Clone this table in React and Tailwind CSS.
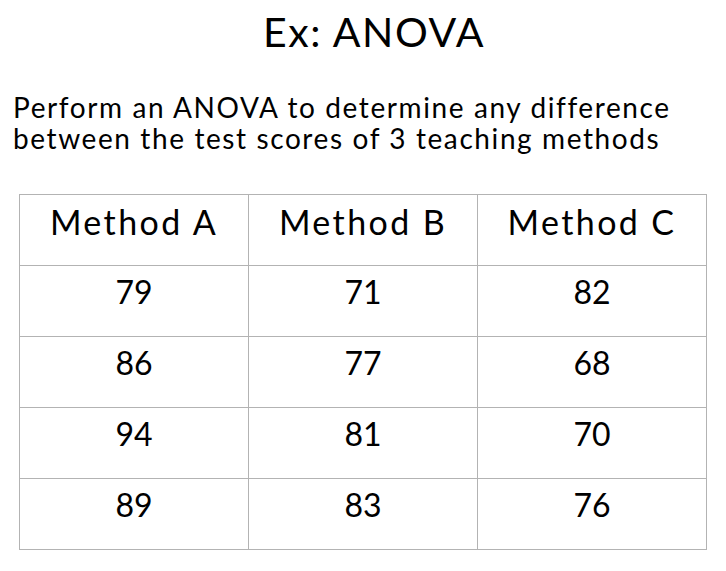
const rows = [
  ['79', '71', '82'],
  ['86', '77', '68'],
  ['94', '81', '70'],
  ['89', '83', '76'],
];

export default function App() {
  return (
    <div className="h-[571px] w-[726px] bg-white text-black" style={{ fontFamily: 'Lato, "Noto Sans", sans-serif' }}>
      <h1 className="pt-[8px] pl-[22px] text-center text-[41px] leading-[48px] tracking-[1.6px]">Ex: ANOVA</h1>
      <p className="mt-[36px] pl-[13px] text-[28px] leading-[31px] tracking-[1.6px]">
        Perform an ANOVA to determine any difference
        <br />
        between the test scores of 3 teaching methods
      </p>
      <table className="ml-[19px] mt-[40px] border-collapse">
        <thead>
          <tr>
            {['Method A', 'Method B', 'Method C'].map((h) => (
              <th key={h} className="h-[71px] w-[229px] border border-[#b3b3b3] pb-[18px] text-center align-middle text-[34px] font-normal tracking-[2.4px]">
                {h}
              </th>
            ))}
          </tr>
        </thead>
        <tbody>
          {rows.map((r, i) => (
            <tr key={i}>
              {r.map((v, j) => (
                <td key={j} className="h-[71px] w-[229px] border border-[#b3b3b3] pb-[18px] text-center align-middle text-[32px]">
                  {v}
                </td>
              ))}
            </tr>
          ))}
        </tbody>
      </table>
    </div>
  );
}
